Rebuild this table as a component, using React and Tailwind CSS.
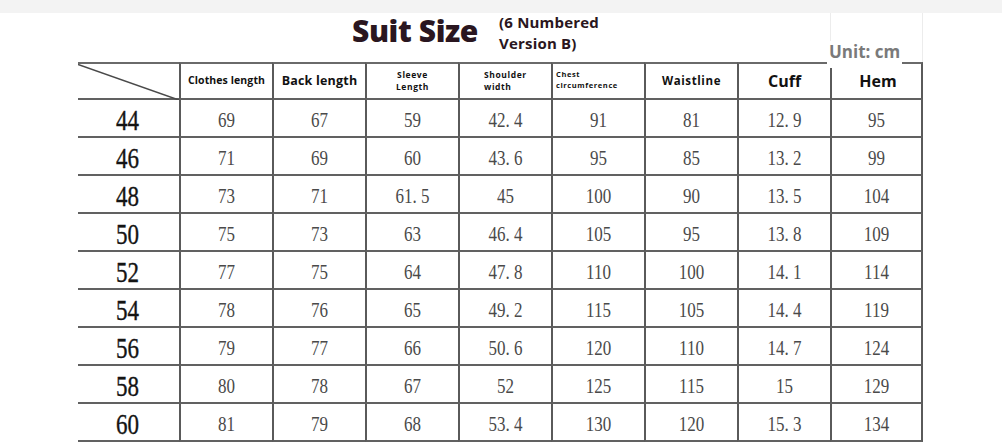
import React from 'react';

const rows = [
  ['44', '69', '67', '59', '42. 4', '91', '81', '12. 9', '95'],
  ['46', '71', '69', '60', '43. 6', '95', '85', '13. 2', '99'],
  ['48', '73', '71', '61. 5', '45', '100', '90', '13. 5', '104'],
  ['50', '75', '73', '63', '46. 4', '105', '95', '13. 8', '109'],
  ['52', '77', '75', '64', '47. 8', '110', '100', '14. 1', '114'],
  ['54', '78', '76', '65', '49. 2', '115', '105', '14. 4', '119'],
  ['56', '79', '77', '66', '50. 6', '120', '110', '14. 7', '124'],
  ['58', '80', '78', '67', '52', '125', '115', '15', '129'],
  ['60', '81', '79', '68', '53. 4', '130', '120', '15. 3', '134'],
];

const grid = 'grid grid-cols-[101px_repeat(8,93px)]';
const cellBase = 'flex items-center justify-center border-b-2 border-[#616161]';
const vline = 'border-l-2 border-l-[#5a5a5a]';

const HeadCell = ({ children, first, last, className = '' }) => (
  <div
    className={`${cellBase} border-t-2 border-t-[#6a6a6a] ${first ? '' : vline} ${
      last ? 'border-r-2 border-r-[#5a5a5a]' : ''
    } relative ${className}`}
  >
    {children}
  </div>
);

const Row = ({ data }) => (
  <div className={`${grid} h-[38px]`}>
    {data.map((v, i) => (
      <div
        key={i}
        className={`${cellBase} ${i === 0 ? '' : vline} ${
          i === data.length - 1 ? 'border-r-2 border-r-[#5a5a5a]' : ''
        }`}
      >
        {i === 0 ? (
          <span className="inline-block translate-y-[3px] scale-y-125 text-[23px] text-[#141414] font-['Liberation_Serif',serif] [-webkit-text-stroke:0.3px_#141414] mr-[2px]">
            {v}
          </span>
        ) : (
          <span className="inline-block translate-y-[3px] scale-y-125 text-[17px] text-[#4a4a4a] font-['Liberation_Serif',serif]">
            {v}
          </span>
        )}
      </div>
    ))}
  </div>
);

export default function App() {
  return (
    <div className="w-[1002px] h-[445px] bg-white overflow-hidden font-['Open_Sans',sans-serif]">
      <div className="h-[13px] bg-[#f3f3f3]" />
      <div className="h-[49px] pl-[352px] flex items-start relative">
        <h1 className="text-[30px] font-extrabold leading-none text-[#2a1620] mt-[3px] tracking-[-0.4px]">
          Suit Size
        </h1>
        <div className="ml-[21px] -mt-[1px] flex flex-col text-[15px] font-bold text-[#2a1620] tracking-[0.2px]">
          <span className="leading-[21px]">(6 Numbered</span>
          <span className="leading-[21px]">Version B)</span>
        </div>
        <div className="absolute left-[830px] top-0 w-[93px] h-[49px] border-x border-[#ececec]" />
      </div>
      <div className="pl-[78px]">
        <div className={`${grid} h-[38px] text-[#111]`}>
          <HeadCell first>
            <svg className="absolute inset-0" width="101" height="36" viewBox="0 0 101 36">
              <line x1="0" y1="0.5" x2="101" y2="36" stroke="#4a4a4a" strokeWidth="1.6" />
            </svg>
          </HeadCell>
          <HeadCell>
            <span className="text-[10.5px] font-bold tracking-[0.1px]">Clothes length</span>
          </HeadCell>
          <HeadCell>
            <span className="text-[12.5px] font-bold tracking-[0.2px]">Back length</span>
          </HeadCell>
          <HeadCell>
            <span className="text-[8.5px] font-bold leading-[12px] tracking-[0.6px] text-center">
              Sleeve
              <br />
              Length
            </span>
          </HeadCell>
          <HeadCell className="!justify-start pl-[24px]">
            <span className="text-[8.5px] font-bold leading-[12px] tracking-[0.6px]">
              Shoulder
              <br />
              width
            </span>
          </HeadCell>
          <HeadCell className="!justify-start pl-[3px]">
            <span className="text-[7.5px] font-bold leading-[11px] tracking-[0.6px] -mt-[3px]">
              Chest
              <br />
              circumference
            </span>
          </HeadCell>
          <HeadCell>
            <span className="text-[11.5px] font-bold tracking-[0.6px]">Waistline</span>
          </HeadCell>
          <HeadCell>
            <span className="text-[16px] font-bold">Cuff</span>
          </HeadCell>
          <HeadCell last>
            <span className="text-[16px] font-bold ml-[3px]">Hem</span>
            <span className="absolute -left-[5px] -top-[23px] bg-white px-[2px] pb-[5px] text-[17px] font-bold leading-[22px] text-[#7a7a7a]">
              Unit: cm
            </span>
          </HeadCell>
        </div>
        {rows.map((r) => (
          <Row key={r[0]} data={r} />
        ))}
      </div>
    </div>
  );
}
